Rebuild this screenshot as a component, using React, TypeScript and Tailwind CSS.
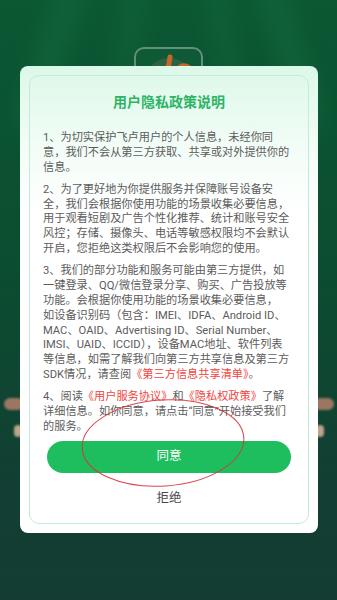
import React from 'react'

const RED = 'text-[#f2453d]'

export default function App() {
  return (
    <div className="relative w-[337px] h-[600px] overflow-hidden bg-[linear-gradient(180deg,#0b5833_0%,#0b4d30_45%,#123f33_80%,#143c33_100%)] font-['Roboto','Noto_Sans_CJK_SC',sans-serif]">
      {/* 背景光线 */}
      <div className="absolute left-[40px] top-[-20px] w-[22px] h-[150px] rotate-[18deg] bg-[#1b7c4a] opacity-40 blur-md" />
      <div className="absolute left-[120px] top-[-20px] w-[18px] h-[120px] rotate-[8deg] bg-[#1b7c4a] opacity-30 blur-md" />
      <div className="absolute left-[215px] top-[-20px] w-[18px] h-[120px] rotate-[-8deg] bg-[#1b7c4a] opacity-30 blur-md" />
      <div className="absolute left-[280px] top-[-20px] w-[22px] h-[150px] rotate-[-18deg] bg-[#1b7c4a] opacity-40 blur-md" />

      {/* logo detrás del modal */}
      <div className="absolute left-[134px] top-[47px] w-[69px] h-[69px] rounded-[10px] border-2 border-[#8aa596]/70 bg-[#0e5a36] flex items-start justify-center">
        <svg width="60" height="60" viewBox="0 0 60 60" className="mt-[2px] blur-[0.6px]">
          <circle cx="30" cy="32" r="25" fill="#2c6242" />
          <path d="M31 6 L29 18" stroke="#c8652b" strokeWidth="5" strokeLinecap="round" fill="none" />
          <path d="M14 20 Q20 14 24 19" stroke="#c0612a" strokeWidth="4" strokeLinecap="round" fill="none" />
          <path d="M38 18 Q44 12 50 16" stroke="#c8652b" strokeWidth="4" strokeLinecap="round" fill="none" />
        </svg>
      </div>

      {/* manchas laterales */}
      <div className="absolute left-[4px] top-[398px] w-[20px] h-[12px] rounded-full bg-[#9b7762] blur-[1px]" />
      <div className="absolute left-[14px] top-[425px] w-[8px] h-[12px] rounded-full bg-[#bfa58d] blur-[1px]" />
      <div className="absolute left-[314px] top-[398px] w-[20px] h-[12px] rounded-full bg-[#9b7762] blur-[1px]" />
      <div className="absolute left-[316px] top-[425px] w-[8px] h-[12px] rounded-full bg-[#bfa58d] blur-[1px]" />

      {/* modal */}
      <div className="relative pt-[66px] pl-[20px]">
        <div className="w-[298px] rounded-[8px] p-[9px] bg-[linear-gradient(180deg,#dcf8e8_0%,#f3fdf7_18%,#ffffff_32%)]">
          <div className="rounded-[10px] border border-[#c3eadb] pt-[16px] pb-[17px]">
            <h1 className="text-center text-[14px] leading-[20px] font-bold text-[#2eb467]">用户隐私政策说明</h1>

            <div className="mt-[19px] px-[13px] text-[11.2px] leading-[14.8px] text-[#5c5c5c] space-y-[7.5px]">
              <p>1、为切实保护飞卢用户的个人信息，未经你同意，我们不会从第三方获取、共享或对外提供你的信息。</p>
              <p>2、为了更好地为你提供服务并保障账号设备安全，我们会根据你使用功能的场景收集必要信息，用于观看短剧及广告个性化推荐、统计和账号安全风控；存储、摄像头、电话等敏感权限均不会默认开启，您拒绝这类权限后不会影响您的使用。</p>
              <p>
                3、我们的部分功能和服务可能由第三方提供，如一键登录、QQ/微信登录分享、购买、广告投放等功能。会根据你使用功能的场景收集必要信息，<br />
                如设备识别码（包含：IMEI、IDFA、Android ID、MAC、OAID、Advertising ID、Serial Number、IMSI、UAID、ICCID），设备MAC地址、软件列表<br />
                等信息，如需了解我们向第三方共享信息及第三方SDK情况，请查阅<span className={RED}>《第三方信息共享清单》</span>。
              </p>
              <p>
                4、阅读<span className={RED}>《用户服务协议》</span>和<span className={RED}>《隐私权政策》</span>了解详细信息。如你同意，请点击“同意”开始接受我们的服务。
              </p>
            </div>

            <div className="mt-[6px] px-[17px]">
              <button className="w-full h-[32px] rounded-full bg-[#1ebe5f] text-white text-[12.5px]">同意</button>
            </div>
            <div className="mt-[17px] text-center text-[12.5px] leading-[16px] text-[#4a4a4a]">拒绝</div>
          </div>
        </div>
      </div>

      {/* marca roja encima */}
      <svg className="absolute left-0 top-0 pointer-events-none" width="337" height="600">
        <ellipse cx="163" cy="443" rx="81" ry="43" transform="rotate(-4 163 443)" fill="none" stroke="#d8323a" strokeOpacity="0.9" strokeWidth="1" />
      </svg>
    </div>
  )
}
